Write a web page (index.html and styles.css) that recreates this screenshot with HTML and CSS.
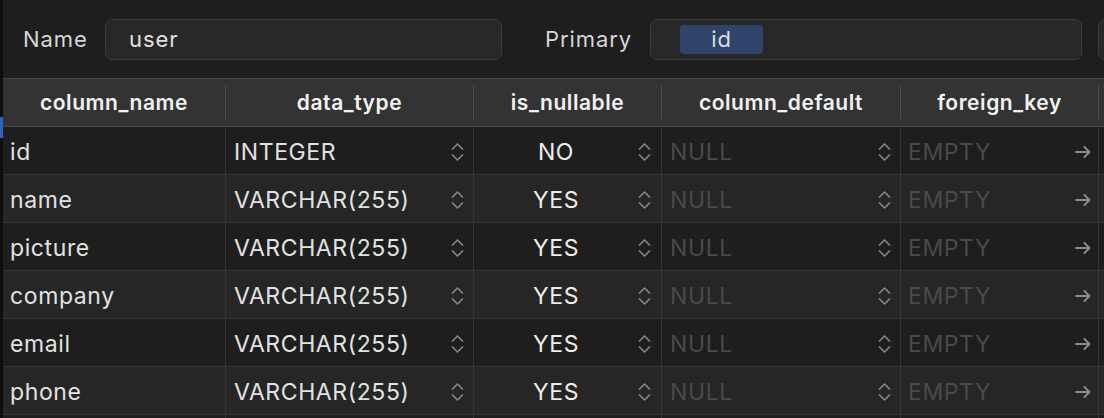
FILE: index.html
```html
<!DOCTYPE html>
<html lang="en">
<head>
<meta charset="utf-8">
<title>Table editor</title>
<link rel="stylesheet" href="styles.css">
</head>
<body>
<div class="app">
  <div class="edge"><div class="edge-marker"></div></div>
  <div class="main">
    <div class="toolbar">
      <span class="label label-name">Name</span>
      <div class="field field-name">user</div>
      <span class="label label-primary">Primary</span>
      <div class="field field-primary"><span class="chip">id</span></div>
      <div class="field field-extra"></div>
    </div>
    <div class="table">
      <div class="thead">
        <div class="th">column_name</div>
        <div class="th">data_type</div>
        <div class="th">is_nullable</div>
        <div class="th">column_default</div>
        <div class="th">foreign_key</div>
        <div class="th th-last"></div>
      </div>
      <div class="tbody" id="tbody"></div>
      <div class="tr tr-empty">
        <div class="td"></div>
        <div class="td"></div>
        <div class="td"></div>
        <div class="td"></div>
        <div class="td"></div>
        <div class="td td-last"></div>
      </div>
    </div>
  </div>
</div>
<template id="row-tpl">
  <div class="tr">
    <div class="td td-name"></div>
    <div class="td td-type"><span class="val"></span><svg class="stepper" viewBox="0 0 13 22" width="13" height="22"><path d="M1.5 8 L6.5 3 L11.5 8 M1.5 14 L6.5 19 L11.5 14"/></svg></div>
    <div class="td td-null"><span class="val"></span><svg class="stepper" viewBox="0 0 13 22" width="13" height="22"><path d="M1.5 8 L6.5 3 L11.5 8 M1.5 14 L6.5 19 L11.5 14"/></svg></div>
    <div class="td td-default"><span class="val muted">NULL</span><svg class="stepper" viewBox="0 0 13 22" width="13" height="22"><path d="M1.5 8 L6.5 3 L11.5 8 M1.5 14 L6.5 19 L11.5 14"/></svg></div>
    <div class="td td-fk"><span class="val muted">EMPTY</span><svg class="arrow" viewBox="0 0 16 12" width="16" height="12"><path d="M1 6 H14.5 M9.5 1 L14.5 6 L9.5 11"/></svg></div>
    <div class="td td-last"></div>
  </div>
</template>
<script src="app.js"></script>
</body>
</html>
```
FILE: app.js
```js
const rows = [
  ["id", "INTEGER", "NO"],
  ["name", "VARCHAR(255)", "YES"],
  ["picture", "VARCHAR(255)", "YES"],
  ["company", "VARCHAR(255)", "YES"],
  ["email", "VARCHAR(255)", "YES"],
  ["phone", "VARCHAR(255)", "YES"]
];
const tpl = document.getElementById("row-tpl");
const body = document.getElementById("tbody");
rows.forEach(([name, type, nullable], i) => {
  const node = tpl.content.firstElementChild.cloneNode(true);
  if (i % 2 === 1) node.classList.add("alt");
  node.querySelector(".td-name").textContent = name;
  node.querySelector(".td-type .val").textContent = type;
  node.querySelector(".td-null .val").textContent = nullable;
  body.appendChild(node);
});
```
FILE: styles.css
```css
* { box-sizing: border-box; }
html, body { margin: 0; padding: 0; }
body {
  background: #1e1e1e;
  font-family: Inter, "Noto Sans", sans-serif;
  color: #e2e2e2;
  width: 1104px;
  height: 418px;
  overflow: hidden;
}
.app { display: flex; height: 418px; }
.edge {
  width: 3px;
  flex: none;
  background: #0e0e0e;
  padding-top: 117px;
}
.edge-marker { height: 21px; background: #2a62c9; }
.main { flex: 1; min-width: 0; overflow: hidden; }

.toolbar {
  display: flex;
  align-items: center;
  height: 78px;
  padding-left: 20px;
  white-space: nowrap;
}
.label { font-size: 22px; letter-spacing: 0.9px; color: #d6d6d6; flex: none; }
.label-name { width: 82px; }
.label-primary { margin-left: 43px; width: 105px; }
.field {
  flex: none;
  height: 41px;
  background: #282828;
  border: 1px solid #3b3b3b;
  border-radius: 7px;
  display: flex;
  align-items: center;
  font-size: 22px;
  letter-spacing: 0.9px;
  color: #e0e0e0;
}
.field-name { width: 397px; padding-left: 23px; }
.field-primary { width: 432px; padding-left: 29px; }
.field-extra { width: 60px; margin-left: 16px; }
.chip {
  width: 83px;
  height: 29px;
  border-radius: 4px;
  background: #2f4468;
  color: #d9dce4;
  display: flex;
  align-items: center;
  justify-content: center;
}

.table { border-top: 1px solid #474747; }
.thead, .tr {
  display: grid;
  grid-template-columns: 223px 248px 188px 239px 198px 1fr;
}
.thead {
  background: #333333;
  padding: 7px 0;
  border-bottom: 1px solid #474747;
}
.th {
  height: 33px;
  border-right: 1px solid #4c4c4c;
  display: flex;
  align-items: center;
  justify-content: center;
  font-size: 21px;
  letter-spacing: 0.55px;
  font-weight: 600;
  color: #f2f2f2;
}
.th-last { border-right: none; }

.tr {
  height: 48px;
  background: #1e1e1e;
}
.tr.alt { background: #262626; }
.td {
  border-right: 1px solid #353535;
  border-bottom: 1px solid #353535;
  display: flex;
  align-items: center;
  font-size: 23px;
  letter-spacing: 0.6px;
  color: #e2e2e2;
  padding-top: 2px;
  white-space: nowrap;
}
.td-last { border-right: none; }
.td-name { padding-left: 7px; }
.td-type { padding-left: 8px; padding-right: 9px; }
.td-type .val { flex: 1; }
.td-null { padding-right: 10px; }
.td-null .val { flex: 1; text-align: center; color: #ededed; }
.td-default { padding-left: 8px; padding-right: 9px; }
.td-default .val { flex: 1; }
.td-fk { padding-left: 7px; padding-right: 7px; }
.td-fk .val { flex: 1; }
.muted { color: #4a4a4a; }
.stepper { flex: none; fill: none; stroke: #858585; stroke-width: 1.7; stroke-linecap: round; stroke-linejoin: round; }
.arrow { flex: none; fill: none; stroke: #8a8a8a; stroke-width: 1.9; stroke-linecap: round; stroke-linejoin: round; }
```
